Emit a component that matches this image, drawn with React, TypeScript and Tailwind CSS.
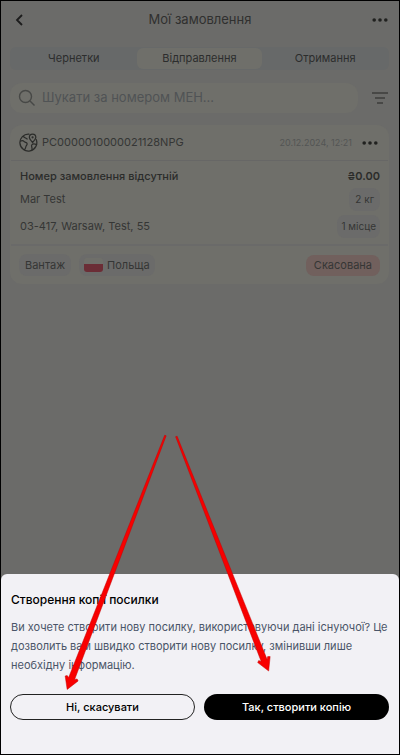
import clsx from "clsx";
import type { ReactNode } from "react";

const tabs = ["Чернетки", "Відправлення", "Отримання"];

const Dots = () => (
  <svg viewBox="0 0 16 4" className="h-1 w-4" fill="#20211f" aria-hidden="true">
    <circle cx="2.2" cy="2" r="1.8" />
    <circle cx="8" cy="2" r="1.8" />
    <circle cx="13.8" cy="2" r="1.8" />
  </svg>
);

const GlobeIcon = () => (
  <svg
    viewBox="0 0 20 20"
    className="size-[19px]"
    fill="none"
    stroke="#2b2c2a"
    strokeWidth="1.3"
    strokeLinecap="round"
    strokeLinejoin="round"
    aria-hidden="true"
  >
    <path d="M10.500 1.200A8.900 8.900 0 1 0 18.200 7" />
    <path d="M14.300 10c-2-2.100-3.400-3.700-3.400-5.400a3.400 3.400 0 0 1 6.800 0c0 1.700-1.400 3.300-3.400 5.400Z" />
    <circle cx="14.300" cy="4.600" r="0.500" />
    <path d="M1.500 8.500c1.500-.6 3.200-.3 4 .6.800 1 2.500.6 3 1.900.5 1.400-1 2-1.200 3.200-.2 1.300-.7 2.600-1.800 3.600" />
    <path d="M4.600 3.500c1 1.600 2.500 1.600 4 2.800" />
    <path d="M18.500 12.200c-1.800-.8-4.200-1-5.100.4-.8 1.300.8 2.700.3 5" />
  </svg>
);

const Chip = ({
  children,
  className,
}: {
  children: ReactNode;
  className?: string;
}) => (
  <span
    className={clsx("flex items-center rounded-lg bg-[#6b6b6a]", className)}
  >
    {children}
  </span>
);

const OrderCard = () => (
  <article className="mt-3 mr-2.5 ml-[9px] rounded-xl bg-[#6f6f6a] text-[11px] text-[#353635]">
    <div className="mx-px flex h-9 items-center border-b border-[#676766] pr-2 pl-2">
      <GlobeIcon />
      <span className="ml-1">PC0000010000021128NPG</span>
      <time className="ml-auto text-[9px] text-[#535554]">
        20.12.2024, 12:21
      </time>
      <button type="button" aria-label="Дії" className="mr-0.5 ml-2.5 py-2">
        <Dots />
      </button>
    </div>

    <div className="mx-px border-b-2 border-[#6a6a69] pt-1.5 pr-2 pb-1 pl-[9px]">
      <div className="mb-px flex h-[18px] items-center justify-between">
        <h2 className="font-medium text-[#2b2c2a]">
          Номер замовлення відсутній
        </h2>
        <span className="font-semibold text-[#2b2c2a]">₴0.00</span>
      </div>
      <div className="flex h-[27px] items-center justify-between">
        <span>Mar Test</span>
        <Chip className="h-[23px] px-1.5 text-[10px]">2 кг</Chip>
      </div>
      <div className="flex h-[27px] items-center justify-between">
        <span>03-417, Warsaw, Test, 55</span>
        <Chip className="h-[23px] px-1 text-[10px]">1 місце</Chip>
      </div>
    </div>

    <div className="flex items-center px-[9px] py-2">
      <Chip className="h-[22px] px-1.5">Вантаж</Chip>
      <Chip className="ml-2 h-[22px] gap-1 px-[5px]">
        <span className="h-[14px] w-[19px] overflow-hidden rounded-[3px] bg-[#6f6f6a] pt-1.5">
          <span className="block h-2 bg-[#6b2d36]" />
        </span>
        Польща
      </Chip>
      <span className="ml-auto flex h-[21px] items-center rounded-lg bg-[#71605d] px-2">
        Скасована
      </span>
    </div>
  </article>
);

const CopySheet = () => (
  <section
    role="dialog"
    aria-labelledby="copy-title"
    className="mt-auto rounded-t-md bg-[#f2f1f5] pt-4 pr-2.5 pb-[34px] pl-[9px]"
  >
    <h2 id="copy-title" className="px-px text-xs leading-5 font-medium text-black">
      Створення копії посилки
    </h2>
    <p className="mt-2 pl-px text-[11px] leading-[19px] text-[#4a5568]">
      Ви хочете створити нову посилку, використовуючи дані існуючої? Це
      дозволить вам швидко створити нову посилку, змінивши лише необхідну
      інформацію.
    </p>
    <div className="mt-[19px] grid grid-cols-2 gap-[9px] text-[11px] font-medium">
      <button
        type="button"
        className="h-[26px] rounded-full border border-[#222] text-black"
      >
        Ні, скасувати
      </button>
      <button type="button" className="h-[26px] rounded-full bg-black text-white">
        Так, створити копію
      </button>
    </div>
  </section>
);

const Arrows = () => (
  <svg
    viewBox="0 0 400 755"
    className="pointer-events-none absolute inset-0 size-full"
    fill="#f80000"
    stroke="#c40000"
    strokeWidth="0.500"
    strokeLinejoin="round"
    aria-hidden="true"
  >
    <path d="M164.500 435.500L166 436L74 681L76.500 680.500L77.500 682.500L66.500 691L64.500 677.500L66.500 677L68 679Z" />
    <path d="M175.500 437L177 436.500L267.500 661L268 658L270.500 658L269 672.500L258 664L259 662L261.500 663Z" />
  </svg>
);

const App = () => {
  return (
    <main className="relative flex min-h-screen flex-col border border-black bg-[#6b6b69] font-['Inter','Liberation_Sans',sans-serif]">
      <header className="grid h-[38px] grid-cols-[16px_1fr_16px] items-center px-[11px]">
        <button type="button" aria-label="Назад" className="pl-0.5">
          <svg viewBox="0 0 10 14" className="h-[14px] w-[10px]" aria-hidden="true">
            <path
              d="M8 2L3 7L8 12"
              fill="none"
              stroke="#1c1c1c"
              strokeWidth="1.800"
            />
          </svg>
        </button>
        <h1 className="text-center text-[13px] text-[#30302f]">Мої замовлення</h1>
        <button type="button" aria-label="Меню" className="py-2">
          <Dots />
        </button>
      </header>

      <nav className="mt-2 mr-2.5 ml-[9px] grid h-[23px] grid-cols-3 rounded-md bg-[#676969] p-px text-[11px] text-[#2c2d2d]">
        {tabs.map((tab, i) => (
          <button
            key={tab}
            type="button"
            className={clsx("rounded-md", i === 1 && "bg-[#6f6f6a]")}
          >
            {tab}
          </button>
        ))}
      </nav>

      <div className="mt-[13px] flex items-center pr-[11px] pl-[9px]">
        <label className="flex h-[30px] flex-1 items-center rounded-xl bg-[#6f6f6a] pl-2">
          <svg
            viewBox="0 0 18 18"
            className="size-[18px]"
            fill="none"
            stroke="#474846"
            strokeWidth="1.400"
            aria-hidden="true"
          >
            <circle cx="7.500" cy="7.500" r="6" />
            <path d="M12 12L16.500 16.500" />
          </svg>
          <input
            type="text"
            aria-label="Пошук"
            placeholder="Шукати за номером МЕН..."
            className="ml-1.5 min-w-0 flex-1 bg-transparent text-[13px] outline-none placeholder:text-[#505355]"
          />
        </label>
        <button type="button" aria-label="Фільтр" className="ml-3.5">
          <svg
            viewBox="0 0 16 12"
            className="h-3 w-4"
            stroke="#262725"
            strokeWidth="1.200"
            aria-hidden="true"
          >
            <path d="M0 1H16M3 6H13M5 11H11" />
          </svg>
        </button>
      </div>

      <OrderCard />
      <CopySheet />
      <Arrows />
    </main>
  );
};

export default App;
